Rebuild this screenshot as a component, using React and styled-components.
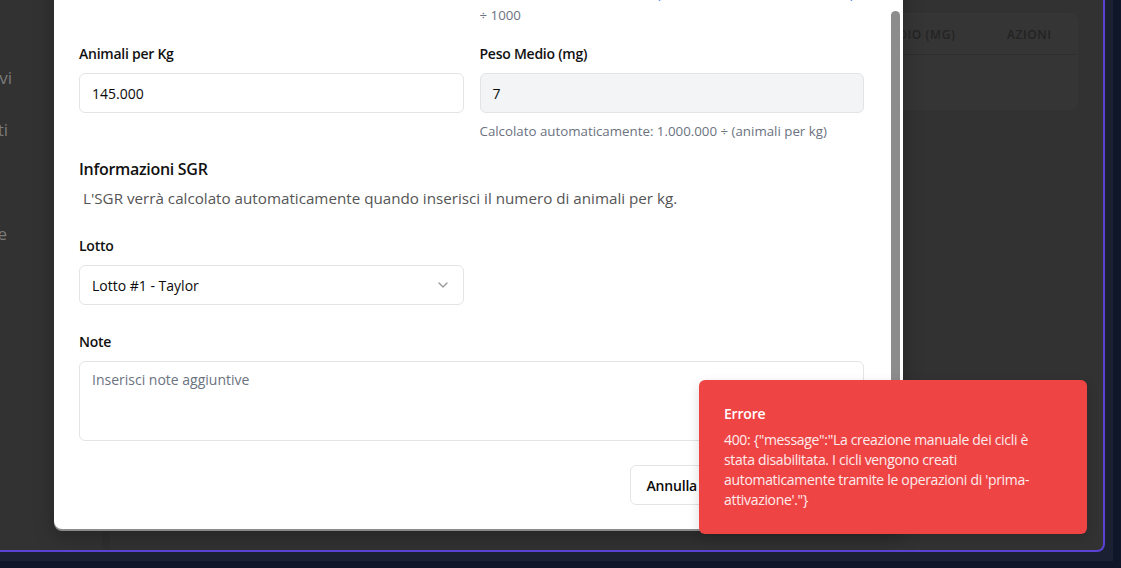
import React from 'react';
import styled, { createGlobalStyle } from 'styled-components';
import { ChevronDown } from 'lucide-react';

const GlobalStyle = createGlobalStyle`
  html, body {
    margin: 0;
    padding: 0;
    height: 100%;
    overflow: hidden;
  }
  body {
    background: #10162a;
    font-family: "Open Sans", "Noto Sans", sans-serif;
  }
  * { box-sizing: border-box; }
`;

const Frame = styled.div`
  width: 1113px;
  height: 561px;
  padding: 0 8px 9px 0;
  background: #1b2133;
`;

const Window = styled.div`
  position: relative;
  display: flex;
  width: 100%;
  height: 100%;
  background: #323232;
  border-right: 2px solid #5a43d4;
  border-bottom: 2px solid #5a43d4;
  border-bottom-right-radius: 8px;
  overflow: hidden;
`;

const Sidebar = styled.nav`
  flex: 0 0 110px;
  display: flex;
  flex-direction: column;
  gap: 28px;
  padding-top: 66px;
  border-right: 8px solid #2f2f2f;
`;

const NavItem = styled.div`
  width: ${p => p.$visible}px;
  height: 24px;
  display: flex;
  justify-content: flex-end;
  overflow: hidden;
  white-space: nowrap;
  font-size: 17px;
  line-height: 24px;
  color: #7a7a7a;
`;

const Main = styled.main`
  flex: 1;
  padding: 13px 25px 0 25px;
`;

const TableCard = styled.div`
  height: 97px;
  background: #353535;
  border: 1px solid #363636;
  border-radius: 8px;
`;

const HeadRow = styled.div`
  display: grid;
  grid-template-columns: 1fr 1fr 1fr 1fr 164px 94px;
  height: 41px;
  align-items: center;
  border-bottom: 1px solid #2e2e2e;
`;

const HeadCell = styled.div`
  padding-left: 24px;
  font-size: 12px;
  font-weight: 600;
  letter-spacing: 0.05em;
  text-transform: uppercase;
  color: #232323;
`;

const EmptyRow = styled.div`
  height: 54px;
  display: flex;
  align-items: center;
  justify-content: center;
  font-size: 14px;
  color: #2a2a2a;
`;

const Modal = styled.div`
  position: absolute;
  left: 54px;
  top: -31px;
  width: 849px;
  height: 560px;
  display: flex;
  background: #ffffff;
  border-radius: 8px;
  box-shadow: 0 2px 0 #8b8b8b, 0 8px 20px rgba(0, 0, 0, 0.25);
  overflow: hidden;
`;

const ModalBody = styled.div`
  flex: 1;
  display: flex;
  flex-direction: column;
  justify-content: flex-end;
  padding: 0 27px 24px 25px;
  overflow: hidden;
`;

const ScrollTrack = styled.div`
  flex: 0 0 12px;
  padding-top: 42px;
`;

const ScrollThumb = styled.div`
  width: 9px;
  height: 440px;
  border-radius: 5px;
  background: #8c8c8c;
`;

const Title = styled.h2`
  margin: 0 0 24px;
  font-size: 18px;
  font-weight: 600;
  color: #111;
`;

const Grid = styled.div`
  display: grid;
  grid-template-columns: 1fr 1fr;
  column-gap: 16px;
  align-items: start;
  margin-top: ${p => p.$top || 0}px;
`;

const Field = styled.div`
  display: flex;
  flex-direction: column;
  margin-top: ${p => p.$top || 0}px;
`;

const Label = styled.label`
  font-size: 14px;
  line-height: 20px;
  font-weight: 600;
  letter-spacing: -0.25px;
  color: #111111;
  margin-bottom: 9px;
`;

const Input = styled.div`
  height: 40px;
  display: flex;
  align-items: center;
  padding: 0 12px;
  border: 1px solid #e4e4e7;
  border-radius: 6px;
  background: ${p => (p.$disabled ? '#f3f4f6' : '#ffffff')};
  font-size: 14px;
  color: #0a0a0a;
`;

const SelectBox = styled(Input)`
  justify-content: space-between;
  svg { color: #9a9a9a; }
`;

const TextArea = styled.div`
  height: 80px;
  padding: 8px 12px;
  border: 1px solid #e4e4e7;
  border-radius: 6px;
  font-size: 14px;
  line-height: 20px;
  color: #6b7280;
`;

const Helper = styled.p`
  margin: 8px 0 0;
  font-size: 13.3px;
  line-height: ${p => p.$lh || 20}px;
  color: #6b7280;
`;

const Accent = styled.span`
  color: #3b82f6;
`;

const SectionTitle = styled.h3`
  margin: 16px 0 0;
  font-size: 16px;
  line-height: 24px;
  font-weight: 600;
  letter-spacing: -0.3px;
  color: #111111;
`;

const SectionText = styled.p`
  margin: 5px 0 0;
  padding-left: 4px;
  font-size: 15.2px;
  line-height: 24px;
  color: #555555;
`;

const Footer = styled.div`
  display: flex;
  justify-content: flex-end;
  gap: 8px;
  margin-top: 24px;
`;

const Button = styled.button`
  height: 40px;
  padding: 0 ${p => (p.$primary ? 20 : 16)}px;
  border-radius: 6px;
  font-family: inherit;
  font-size: 14px;
  font-weight: 600;
  letter-spacing: -0.2px;
  border: 1px solid ${p => (p.$primary ? '#2563eb' : '#e4e4e7')};
  background: ${p => (p.$primary ? '#2563eb' : '#ffffff')};
  color: ${p => (p.$primary ? '#ffffff' : '#0a0a0a')};
`;

const Toast = styled.div`
  position: absolute;
  right: 16px;
  bottom: 16px;
  width: 388px;
  padding: 24px 32px 24px 25px;
  background: #ef4444;
  border-radius: 6px;
  color: #ffffff;
  box-shadow: 0 4px 12px rgba(0, 0, 0, 0.15);
`;

const ToastTitle = styled.div`
  font-size: 14px;
  line-height: 20px;
  font-weight: 600;
  letter-spacing: -0.2px;
`;

const ToastText = styled.div`
  margin-top: 6px;
  font-size: 14px;
  line-height: 20px;
  letter-spacing: -0.32px;
  opacity: 0.9;
`;

const navItems = [
  { label: 'Cicli Produttivi', visible: 12 },
  { label: 'Lotti Presenti', visible: 8 },
  { label: 'Ceste', visible: 0 },
  { label: 'Operazioni Recenti e', visible: 7 },
];

const columns = ['Cesta', 'Lotto', 'Data Inizio', 'Animali/Kg', 'Peso Medio (mg)', 'Azioni'];

export default function App() {
  return (
    <>
      <GlobalStyle />
      <Frame>
        <Window>
          <Sidebar>
            {navItems.map(item => (
              <NavItem key={item.label} $visible={item.visible}>
                <span>{item.label}</span>
              </NavItem>
            ))}
          </Sidebar>

          <Main>
            <TableCard>
              <HeadRow>
                {columns.map(c => (
                  <HeadCell key={c}>{c}</HeadCell>
                ))}
              </HeadRow>
              <EmptyRow>Nessun ciclo trovato</EmptyRow>
            </TableCard>
          </Main>

          <Modal>
            <ModalBody>
              <Title>Nuovo Ciclo Produttivo</Title>
              <Grid>
                <Field>
                  <Label>Cesta</Label>
                  <SelectBox>
                    Cesta #12
                    <ChevronDown size={16} />
                  </SelectBox>
                </Field>
                <Field>
                  <Label>Peso Totale (kg)</Label>
                  <Input>20</Input>
                  <Helper $lh={21}>
                    Calcolato automaticamente: <Accent>(animali totali × massa del lotto)</Accent>
                    <br />÷ 1000
                  </Helper>
                </Field>
              </Grid>

              <Grid $top={18}>
                <Field>
                  <Label>Animali per Kg</Label>
                  <Input>145.000</Input>
                </Field>
                <Field>
                  <Label>Peso Medio (mg)</Label>
                  <Input $disabled>7</Input>
                  <Helper>Calcolato automaticamente: 1.000.000 ÷ (animali per kg)</Helper>
                </Field>
              </Grid>

              <SectionTitle>Informazioni SGR</SectionTitle>
              <SectionText>
                L'SGR verrà calcolato automaticamente quando inserisci il numero di animali per kg.
              </SectionText>

              <Grid $top={26}>
                <Field>
                  <Label>Lotto</Label>
                  <SelectBox>
                    Lotto #1 - Taylor
                    <ChevronDown size={16} />
                  </SelectBox>
                </Field>
              </Grid>

              <Field $top={27}>
                <Label>Note</Label>
                <TextArea>Inserisci note aggiuntive</TextArea>
              </Field>

              <Footer>
                <Button>Annulla</Button>
                <Button $primary>Conferma Ciclo</Button>
              </Footer>
            </ModalBody>
            <ScrollTrack>
              <ScrollThumb />
            </ScrollTrack>
          </Modal>

          <Toast>
            <ToastTitle>Errore</ToastTitle>
            <ToastText>
              400: {'{"message":"La creazione manuale dei cicli è stata disabilitata. I cicli vengono creati automaticamente tramite le operazioni di \'prima-attivazione\'."}'}
            </ToastText>
          </Toast>
        </Window>
      </Frame>
    </>
  );
}
